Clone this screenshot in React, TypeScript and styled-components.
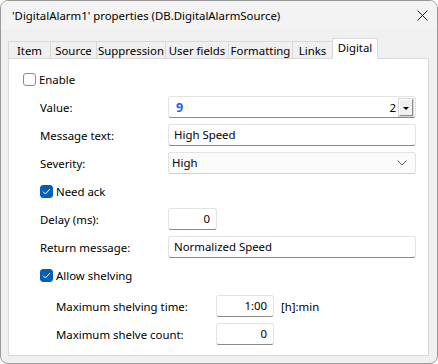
import React from "react"
import styled, { createGlobalStyle } from "styled-components"

const GlobalStyle = createGlobalStyle`
    html, body {
        margin: 0;
        padding: 0;
        background: #ffffff;
    }
    body {
        font-family: "Noto Sans", "Liberation Sans", sans-serif;
        font-size: 11.4px;
        color: #000000;
    }
`

const Window = styled.div`
    width: 438px;
    height: 364px;
    box-sizing: border-box;
    border: 1px solid #9a9a9a;
    border-radius: 8px;
    background: #f0f0f0;
    display: flex;
    flex-direction: column;
    overflow: hidden;
`

const TitleBar = styled.div`
    height: 29px;
    display: flex;
    align-items: center;
    justify-content: space-between;
    padding: 0 9px 0 11px;
    background: #f3f3f3;
`

const Title = styled.span`
    font-size: 11.4px;
`

const CloseButton = styled.button`
    border: none;
    background: transparent;
    padding: 0;
    width: 12px;
    height: 12px;
    display: flex;
    align-items: center;
    justify-content: center;
`

const Body = styled.div`
    flex: 1;
    display: flex;
    flex-direction: column;
    padding: 8px 8px 7px 7px;
`

const TabStrip = styled.div`
    display: flex;
    align-items: flex-end;
    height: 21px;
    margin-bottom: -1px;
    position: relative;
    z-index: 1;
`

const Tab = styled.div<{ $w: number; $active?: boolean }>`
    width: ${p => p.$w}px;
    height: ${p => (p.$active ? 21 : 18)}px;
    box-sizing: border-box;
    display: flex;
    align-items: center;
    justify-content: center;
    padding-bottom: ${p => (p.$active ? 3 : 0)}px;
    border: 1px solid #d9d9d9;
    border-right: ${p => (p.$active ? "1px solid #d9d9d9" : "none")};
    border-bottom: ${p => (p.$active ? "1px solid #ffffff" : "1px solid #d9d9d9")};
    background: ${p => (p.$active ? "#ffffff" : "#f0f0f0")};
    white-space: nowrap;
`

const Panel = styled.div`
    flex: 1;
    background: #ffffff;
    border: 1px solid #d9d9d9;
    padding: 6px 12px 0 14px;
    display: flex;
    flex-direction: column;
`

const Row = styled.div<{ $indent?: number }>`
    height: 28px;
    display: flex;
    align-items: center;
    padding-left: ${p => p.$indent ?? 0}px;
`

const Label = styled.span<{ $w: number }>`
    width: ${p => p.$w}px;
    flex-shrink: 0;
    white-space: nowrap;
`

const Field = styled.div<{ $w?: number; $align?: "left" | "right" }>`
    box-sizing: border-box;
    height: 22px;
    width: ${p => (p.$w ? `${p.$w}px` : "auto")};
    flex: ${p => (p.$w ? "none" : "1")};
    display: flex;
    align-items: center;
    justify-content: ${p => (p.$align === "right" ? "flex-end" : "flex-start")};
    padding: 0 6px 1px 5px;
    background: #ffffff;
    border: 1px solid #e3e3e3;
    border-bottom: 1px solid #8a8a8a;
    border-radius: 3px;
    white-space: nowrap;
`

const SpinField = styled(Field)`
    padding: 0 2px 0 7px;
    justify-content: space-between;
`

const BlueValue = styled.span`
    color: #1f62e8;
    font-weight: 700;
    font-size: 12.5px;
`

const SpinRight = styled.div`
    display: flex;
    align-items: center;
    gap: 3px;
`

const DropButton = styled.div`
    width: 14px;
    height: 17px;
    box-sizing: border-box;
    background: #f0f0f0;
    border: 1px solid #ffffff;
    border-right-color: #8c8c8c;
    border-bottom-color: #8c8c8c;
    box-shadow: 0 0 0 1px #d6d6d6;
    display: flex;
    align-items: center;
    justify-content: center;
`

const Triangle = styled.div`
    width: 0;
    height: 0;
    border-left: 3px solid transparent;
    border-right: 3px solid transparent;
    border-top: 3px solid #000000;
    margin-top: 2px;
`

const Combo = styled(Field)`
    background: #fbfbfb;
    border-bottom-color: #d0d0d0;
    padding: 0 8px 1px 3px;
    justify-content: space-between;
`

const CheckRow = styled.label`
    display: flex;
    align-items: center;
    gap: 3px;
`

const Box = styled.span<{ $checked?: boolean }>`
    width: 13px;
    height: 13px;
    box-sizing: border-box;
    border-radius: 3px;
    border: 1px solid ${p => (p.$checked ? "#005fb8" : "#8a8a8a")};
    background: ${p => (p.$checked ? "#005fb8" : "#ffffff")};
    display: flex;
    align-items: center;
    justify-content: center;
`

const Unit = styled.span`
    margin-left: 7px;
`

const SubSection = styled.div`
    margin-top: 3px;
    display: flex;
    flex-direction: column;
`

const Check = ({ checked, label }: { checked?: boolean; label: string }) => (
    <CheckRow>
        <Box $checked={checked}>
            {checked && (
                <svg width="9" height="7" viewBox="0 0 9 7">
                    <path d="M1 3.6 L3.4 6 L8 1" fill="none" stroke="#ffffff" strokeWidth="1" />
                </svg>
            )}
        </Box>
        {label}
    </CheckRow>
)

const tabs = [
    { name: "Item", w: 42 },
    { name: "Source", w: 46 },
    { name: "Suppression", w: 69 },
    { name: "User fields", w: 63 },
    { name: "Formatting", w: 64 },
    { name: "Links", w: 40 },
    { name: "Digital", w: 46, active: true },
]

export default function App() {
    return (
        <>
            <GlobalStyle />
            <Window>
                <TitleBar>
                    <Title>'DigitalAlarm1' properties (DB.DigitalAlarmSource)</Title>
                    <CloseButton>
                        <svg width="11" height="11" viewBox="0 0 11 11">
                            <path d="M0.5 0.5 L10.5 10.5 M10.5 0.5 L0.5 10.5" stroke="#1a1a1a" strokeWidth="1" />
                        </svg>
                    </CloseButton>
                </TitleBar>
                <Body>
                    <TabStrip>
                        {tabs.map(t => (
                            <Tab key={t.name} $w={t.w} $active={t.active}>
                                {t.name}
                            </Tab>
                        ))}
                    </TabStrip>
                    <Panel>
                        <Row>
                            <Check label="Enable" />
                        </Row>
                        <Row $indent={17}>
                            <Label $w={128}>Value:</Label>
                            <SpinField>
                                <BlueValue>9</BlueValue>
                                <SpinRight>
                                    2
                                    <DropButton>
                                        <Triangle />
                                    </DropButton>
                                </SpinRight>
                            </SpinField>
                        </Row>
                        <Row $indent={17}>
                            <Label $w={128}>Message text:</Label>
                            <Field>High Speed</Field>
                        </Row>
                        <Row $indent={17}>
                            <Label $w={128}>Severity:</Label>
                            <Combo>
                                High
                                <svg width="10" height="6" viewBox="0 0 10 6">
                                    <path d="M0.5 0.5 L5 5 L9.5 0.5" fill="none" stroke="#606060" strokeWidth="1" />
                                </svg>
                            </Combo>
                        </Row>
                        <Row $indent={17}>
                            <Check checked label="Need ack" />
                        </Row>
                        <Row $indent={17}>
                            <Label $w={128}>Delay (ms):</Label>
                            <Field $w={49} $align="right">0</Field>
                        </Row>
                        <Row $indent={17}>
                            <Label $w={128}>Return message:</Label>
                            <Field>Normalized Speed</Field>
                        </Row>
                        <Row $indent={17}>
                            <Check checked label="Allow shelving" />
                        </Row>
                        <SubSection>
                            <Row $indent={33}>
                                <Label $w={160}>Maximum shelving time:</Label>
                                <Field $w={58} $align="right">1:00</Field>
                                <Unit>[h]:min</Unit>
                            </Row>
                            <Row $indent={33}>
                                <Label $w={160}>Maximum shelve count:</Label>
                                <Field $w={58} $align="right">0</Field>
                            </Row>
                        </SubSection>
                    </Panel>
                </Body>
            </Window>
        </>
    )
}
